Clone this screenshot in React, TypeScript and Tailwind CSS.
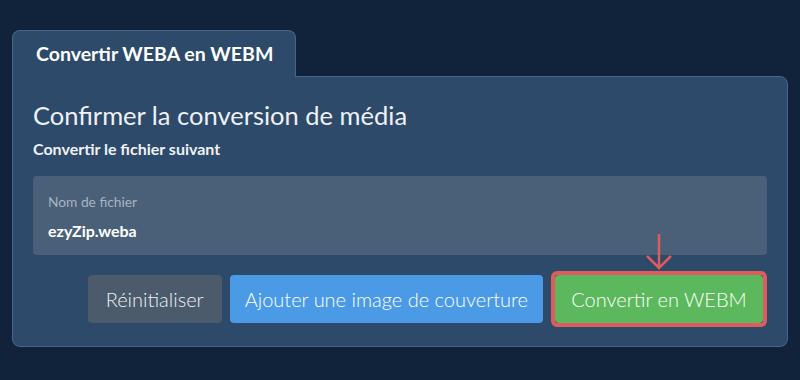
import { useState } from 'react';

export default function App() {
    const [fileName] = useState('ezyZip.weba');

    return (
        <div className="min-h-screen w-full bg-[#11233a] px-3 pt-[30px] font-['Lato','Noto_Sans',sans-serif]">
            {/* Tab */}
            <div className="relative z-10 -mb-px w-[284px] h-[47px] rounded-t-lg border border-b-0 border-[#4b6585] bg-[#2d4a6a] flex items-center pl-[23px]">
                <span className="text-[19.5px] font-bold text-white">Convertir WEBA en WEBM</span>
            </div>

            {/* Card */}
            <div className="w-[776px] rounded-b-lg rounded-tr-lg border border-[#4b6585] bg-[#2d4a6a] px-5 pt-[22px] pb-[19px]">
                <h1 className="text-[25.5px] leading-[32px] text-[#eef1f5]">Confirmer la conversion de média</h1>
                <p className="mt-[6px] text-[16px] leading-6 font-bold text-[#eef1f5]">Convertir le fichier suivant</p>

                <div className="mt-[15px] h-[79px] rounded bg-[#4a6078] px-[15px] pt-[18px]">
                    <div className="text-[13.75px] leading-4 text-[#a7b3c2]">Nom de fichier</div>
                    <div className="mt-[9px] text-[16px] font-bold text-white">{fileName}</div>
                </div>

                <div className="mt-4 flex items-center justify-end gap-2">
                    <button className="h-12 rounded bg-[#4b5b6c] px-[18px] text-[20px] font-light text-[#eef1f5]">Réinitialiser</button>
                    <button className="h-12 rounded bg-[#4a9ae6] px-[15px] text-[20px] font-light text-white">Ajouter une image de couverture</button>
                    <div className="relative rounded-md border-4 border-[#df5c5c]">
                        {/* arrow pointing at the convert button */}
                        <svg className="absolute left-1/2 -top-[42px] -translate-x-1/2" width="32" height="38" viewBox="0 0 32 38" fill="none">
                            <path d="M16 1 V35 M4 23 L16 35 L28 23" stroke="#df5c5c" strokeWidth="2.5" />
                        </svg>
                        <button className="h-12 w-[208px] rounded-sm bg-[#5cb85c] text-[20px] font-light text-white">Convertir en WEBM</button>
                    </div>
                </div>
            </div>
        </div>
    );
}
